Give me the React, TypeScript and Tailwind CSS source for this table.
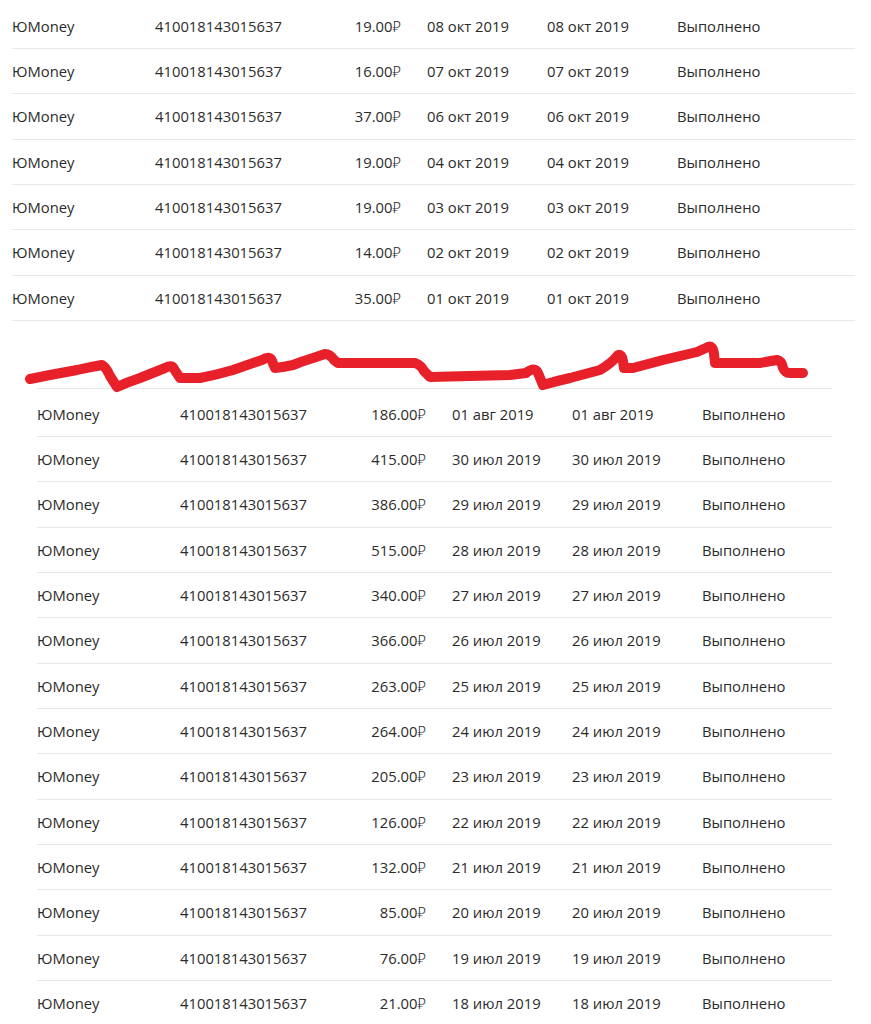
const top = [
  ["19.00", "08 окт 2019"],
  ["16.00", "07 окт 2019"],
  ["37.00", "06 окт 2019"],
  ["19.00", "04 окт 2019"],
  ["19.00", "03 окт 2019"],
  ["14.00", "02 окт 2019"],
  ["35.00", "01 окт 2019"],
];

const bottom = [
  ["186.00", "01 авг 2019"],
  ["415.00", "30 июл 2019"],
  ["386.00", "29 июл 2019"],
  ["515.00", "28 июл 2019"],
  ["340.00", "27 июл 2019"],
  ["366.00", "26 июл 2019"],
  ["263.00", "25 июл 2019"],
  ["264.00", "24 июл 2019"],
  ["205.00", "23 июл 2019"],
  ["126.00", "22 июл 2019"],
  ["132.00", "21 июл 2019"],
  ["85.00", "20 июл 2019"],
  ["76.00", "19 июл 2019"],
  ["21.00", "18 июл 2019"],
];

const Row = ({ amount, date }: { amount: string; date: string }) => (
  <div className="h-[45.33px] flex items-center border-b border-[#e8e8e8] whitespace-nowrap">
    <div className="w-[143px]">ЮMoney</div>
    <div className="w-[170px]">410018143015637</div>
    <div className="w-[76px] text-right">
      {amount}
      <span className="font-light">₽</span>
    </div>
    <div className="w-[146px] pl-[26px]">{date}</div>
    <div className="w-[130px]">{date}</div>
    <div className="flex-1">Выполнено</div>
  </div>
);

const scribble =
  "M30 58 Q40 56 50 54 L77 49 Q90 46 102 44 Q106 46 110 55 L117 66 Q128 61 140 57 L165 47 Q172 43 174 48 L180 57 L200 57 Q216 54 233 49 L262 39 Q270 34 272 40 L275 47 Q284 46 293 44 Q303 40 313 37 L325 33 Q330 33 334 39 L338 42 L415 42 Q421 44 424 50 L430 56 L510 54 L526 52 Q535 45 538 52 L543 64 Q556 60 570 57 L600 49 Q612 42 618 34 Q622 33 623 40 L624 47 L633 47 Q648 43 663 39 L697 31 L708 26 Q713 24 714 33 L715 42 L760 42 Q770 40 777 39 Q782 40 783 47 Q785 52 790 52 L803 52";

export default function App() {
  return (
    <div
      className="w-[871px] h-[1024px] overflow-hidden bg-white text-[14.8px] text-[#2b2b2b]"
      style={{ fontFamily: '"Open Sans", "Noto Sans", "DejaVu Sans", sans-serif' }}
    >
      <div className="ml-[12px] w-[843px] pt-[3.67px]">
        {top.map(([a, d], i) => (
          <Row key={i} amount={a} date={d} />
        ))}
      </div>
      <svg width="871" height="67" viewBox="0 0 871 67" className="block overflow-visible">
        <path
          d={scribble}
          fill="none"
          stroke="#e8202a"
          strokeWidth="10"
          strokeLinecap="round"
          strokeLinejoin="round"
        />
      </svg>
      <div className="ml-[37px] w-[795px] border-t border-[#e8e8e8] pt-[2.67px]">
        {bottom.map(([a, d], i) => (
          <Row key={i} amount={a} date={d} />
        ))}
      </div>
    </div>
  );
}
